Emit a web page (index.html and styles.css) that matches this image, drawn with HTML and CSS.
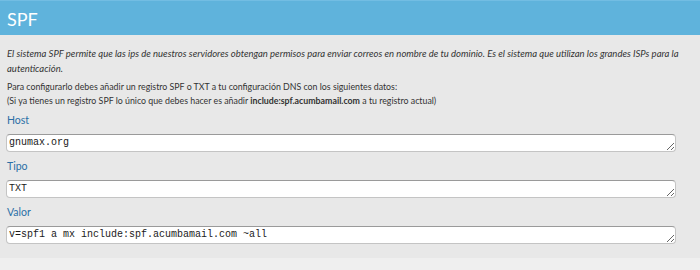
FILE: index.html
```html
<!doctype html>
<html>
  <head>
    <meta charset="UTF-8" />
    <meta name="viewport" content="width=device-width, initial-scale=1.0" />
    <title>SPF</title>
    <link rel="stylesheet" href="styles.css">
  </head>
  <body>
    <div class="panel">
      <h2 class="panel-title">SPF</h2>

      <div class="panel-body">
        <p class="intro">
          El sistema SPF permite que las ips de nuestros servidores obtengan permisos para enviar correos en nombre de tu dominio. Es el sistema que utilizan los grandes ISPs para la autenticación.
        </p>

        <p class="help">
          Para configurarlo debes añadir un registro SPF o TXT a tu configuración DNS con los siguientes datos:<br>
          (Si ya tienes un registro SPF lo único que debes hacer es añadir <strong>include:spf.acumbamail.com</strong> a tu registro actual)
        </p>

        <div class="field">
          <label for="spf-host">Host</label>
          <textarea id="spf-host" rows="1" readonly>gnumax.org</textarea>
        </div>

        <div class="field">
          <label for="spf-type">Tipo</label>
          <textarea id="spf-type" rows="1" readonly>TXT</textarea>
        </div>

        <div class="field">
          <label for="spf-value">Valor</label>
          <textarea id="spf-value" rows="1" readonly>v=spf1 a mx include:spf.acumbamail.com ~all</textarea>
        </div>
      </div>
    </div>
  </body>
</html>
```

FILE: styles.css
```css
html {
  background-color: #efefef;
}

body {
  margin: 0;
  font-family: Lato, "Open Sans", Arial, sans-serif;
  color: #333;
}

.panel {
  background-color: #e8e8e8;
  padding-bottom: 7px;
}

.panel-title {
  margin: 0;
  height: 34px;
  padding: 0 7px;
  border-top: 1px solid #72bde3;
  background-color: #5fb3dc;
  color: #fff;
  font-size: 18px;
  font-weight: normal;
  line-height: 36px;
}

.panel-body {
  padding: 11px 7px 0;
}

.intro {
  margin: 0;
  font-size: 9.5px;
  font-style: italic;
  line-height: 15px;
}

.help {
  margin: 4px 0 0;
  font-size: 8.8px;
  line-height: 14px;
}

.help strong {
  font-weight: bold;
}

.field {
  margin-top: 5px;
}

.field + .field {
  margin-top: 0;
}

.field label {
  display: block;
  color: #2b6fa6;
  font-size: 10.5px;
  line-height: 14px;
}

.field textarea {
  display: block;
  box-sizing: border-box;
  width: 670px;
  height: 18px;
  margin: 7px 0 7px -1px;
  padding: 1px 2px;
  border: 1px solid #c4c4c4;
  border-top-color: #9a9a9a;
  border-radius: 4px;
  background-color: #fff;
  color: #1a1a1a;
  font-family: "Liberation Mono", "Courier New", monospace;
  font-size: 10px;
  line-height: 14px;
  overflow: hidden;
}
```
